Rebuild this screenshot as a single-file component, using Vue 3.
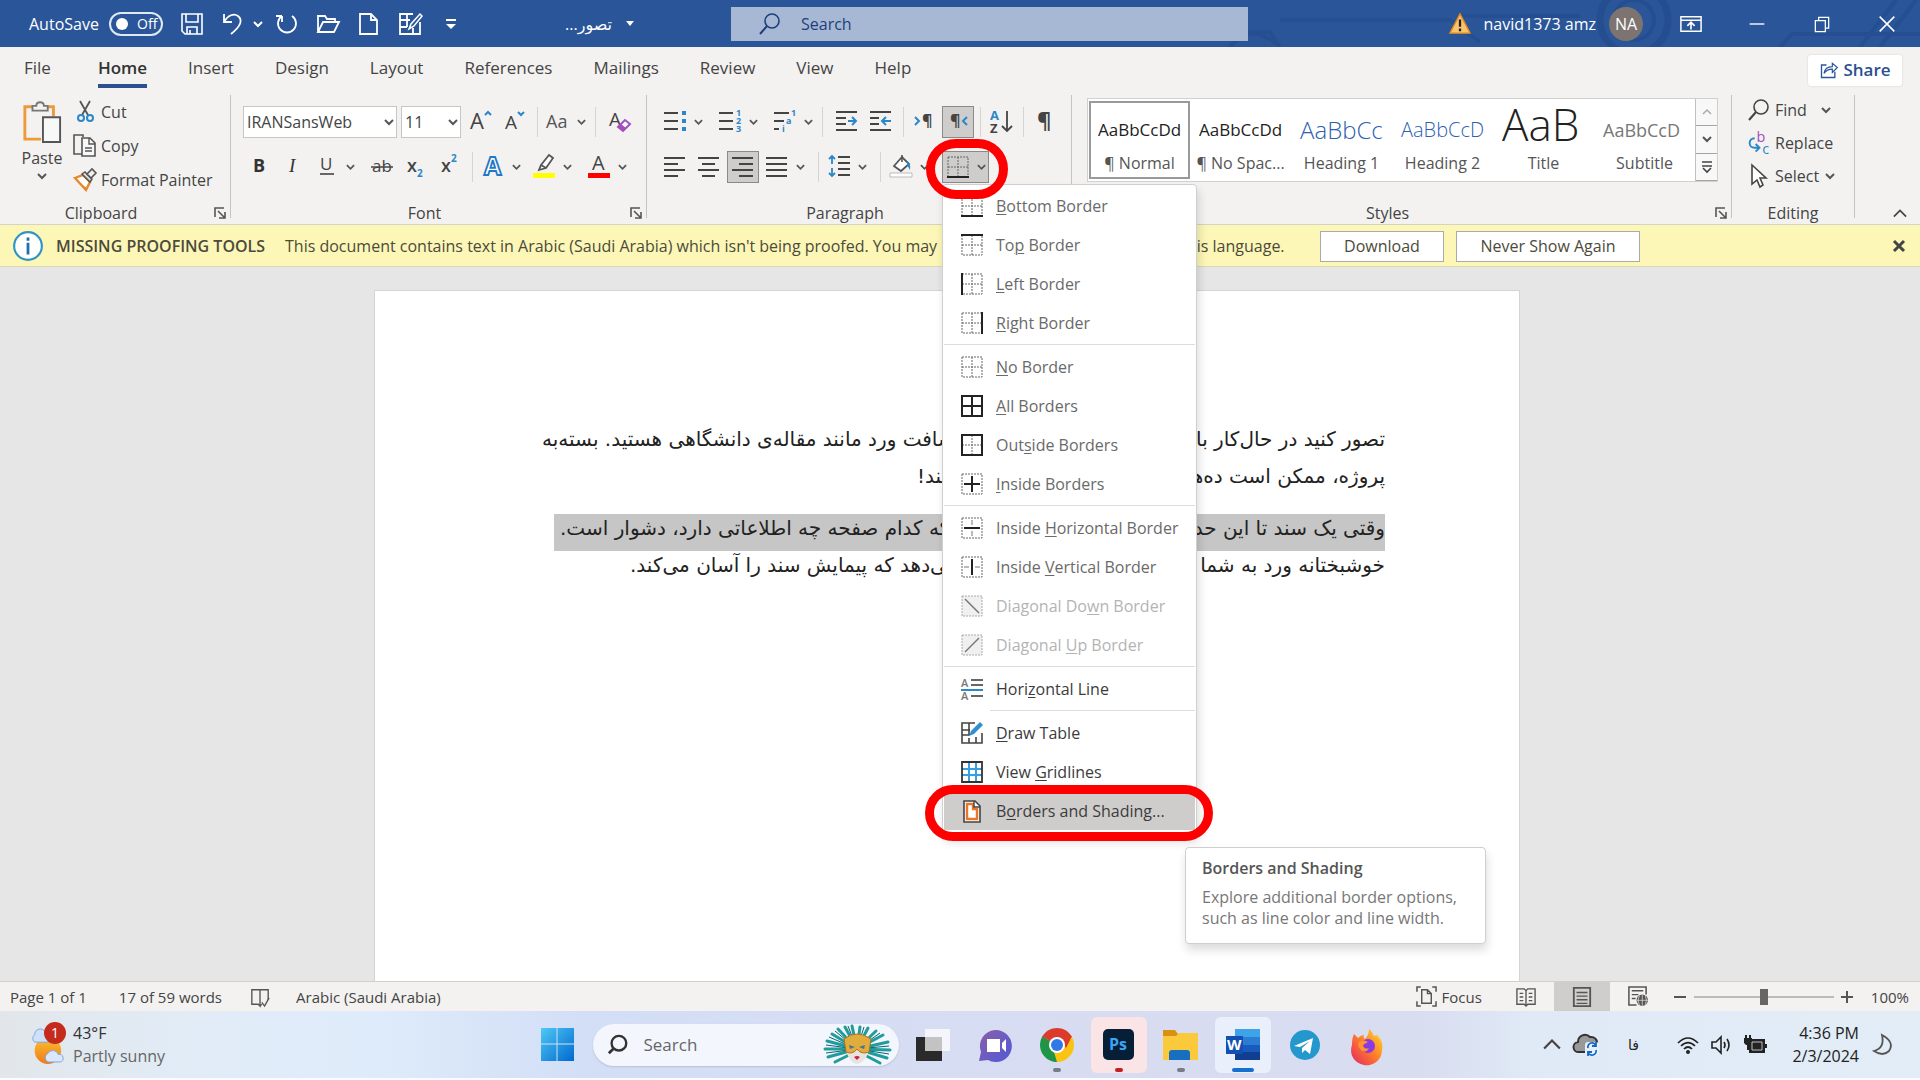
<script setup>
import { h } from 'vue'

const K = '#444'
const B = '#2b88c8'
const line = (d, c = K, w = 2) => `<path d="${d}" fill="none" stroke="${c}" stroke-width="${w}"/>`

// Table-border glyphs: a dotted 2x2 grid with solid strokes laid over it
const grid = '<path d="M1 1H21V21H1ZM11 1V21M1 11H21" fill="none" stroke="#666" stroke-width="1" stroke-dasharray="2 1"/>'
const outer = '<path d="M1 1H21V21H1Z" fill="none" stroke="#666" stroke-width="1" stroke-dasharray="2 1"/>'
const bold = d => `<path d="${d}" fill="none" stroke="#222" stroke-width="2"/>`

const paths = {
  save: line('M2 2H22V22H5L2 19ZM6 2V10H18V2M7 22V15H17V22M10 18V22', '#fff', 1.6),
  undo: line('M3 2V10H11M3 10C7 3 13 1 17 4C22 8 20 14 10 22', '#fff', 1.8),
  redo: line('M17 4A9 9 0 1 1 7 4M7 4H1M7 4V10', '#fff', 1.8),
  open: line('M2 20V4H9L11 7H19V10M2 20H18L23 10H7Z', '#fff', 1.8),
  page: line('M3 2H14L20 8V22H3ZM14 2V8H20', '#fff', 1.8),
  table: line('M15 2H2V22H22V10M2 8H12M2 15H9M9 2V15M15 16V22', '#fff', 1.8) + '<path d="M22 2L13 12L11 17L16 14L24 4Z" fill="#2a5699" stroke="#fff" stroke-width="1.5"/>',
  more: line('M7 8H17', '#fff', 2) + '<path d="M7 12H17L12 17Z" fill="#fff"/>',
  search: '<circle cx="14" cy="9" r="7" fill="none" stroke="currentColor" stroke-width="1.6"/><path d="M9 14L2 22" stroke="currentColor" stroke-width="2"/>',
  find: '<circle cx="13" cy="10" r="8" fill="none" stroke="currentColor" stroke-width="2.6"/><path d="M7 16L2 21" stroke="currentColor" stroke-width="3"/>',
  warn: '<path d="M12 1L23 22H1Z" fill="#f9c46b" stroke="#e58a1b" stroke-width="1.5"/><path d="M12 7V15M12 17V20" stroke="#222" stroke-width="2.5"/>',
  ribbonopt: line('M1 4H23V20H1ZM1 8H23', '#fff', 1.6) + line('M12 18V10M8 14L12 10L16 14', '#fff', 1.8),
  min: line('M4 12H20', '#fff', 1.5),
  restore: line('M4 8H16V21H4ZM8 8V4H20V17H16', '#fff', 1.5),
  close: line('M4 4L20 20M20 4L4 20', 'currentColor', 1.7),
  share: line('M9 6H3V21H19V14', '#2b579a', 1.6) + line('M6 16C7 10 11 8 16 8V4L22 9L16 15V11C12 11 9 12 6 16Z', '#2b579a', 1.4),
  paste: '<path d="M12 6H3V40H20M26 6H33V16" fill="none" stroke="#ee9a3a" stroke-width="3"/><path d="M11 10V5H15C15 0 23 0 23 5H27V10Z" fill="#f3f2f1" stroke="#777" stroke-width="2"/><path d="M22 17H40V43H22Z" fill="#f8f8f8" stroke="#555" stroke-width="2"/>',
  cut: line('M7 1L15 15M17 1L9 15', '#555', 1.8) + '<circle cx="8" cy="18" r="3" fill="none" stroke="#2b88c8" stroke-width="2"/><circle cx="17" cy="18" r="3" fill="none" stroke="#2b88c8" stroke-width="2"/>',
  copy: line('M9 20H1V1H10V3', '#555', 1.6) + '<path d="M9 4H17L22 9V22H9Z" fill="#f8f8f8" stroke="#555" stroke-width="1.6"/>' + line('M16 4V10H22M12 14H19M12 17H19', '#555', 1.4),
  painter: '<path d="M2 10L10 7L17 14L13 22Z" fill="#fff" stroke="#e8872b" stroke-width="2.4"/><path d="M6 15L14 20L12 22Z" fill="#e8872b"/><path d="M9 6L12 4L19 11L17 14Z" fill="#ddd" stroke="#555" stroke-width="1.5"/><path d="M14 6L19 1L23 5L18 10Z" fill="#eee" stroke="#555" stroke-width="1.6"/>',
  launcher: line('M1 10V1H10M4 4L11 11M11 5V11H5', '#555', 1.6),
  caret: line('M1 2L5 6L9 2', '#555', 2),
  up: line('M1 8L8 1L15 8', '#444', 2),
  grow: '<text x="0" y="19" font-size="22" fill="#444">A</text>' + line('M15 5L18 2L21 5', B),
  shrink: '<text x="1" y="19" font-size="19" fill="#444">A</text>' + line('M14 2L17 5L20 2', B),
  aa: '<text x="-1" y="18" font-size="18" fill="#555">Aa</text>',
  clear: '<text x="0" y="16" font-size="19" fill="#444">A</text><path d="M9 17L16 10L21 14L14 21Z" fill="#fff" stroke="#a44fbd" stroke-width="2"/><path d="M9 17L12 14L17 18L14 21Z" fill="#a44fbd"/>',
  bold: '<text x="5" y="17" font-size="18" font-weight="700" fill="#333">B</text>',
  italic: '<text x="7" y="17" font-size="19" font-style="italic" style="font-family:Liberation Serif,serif" fill="#333">I</text>',
  under: '<text x="4" y="15" font-size="17" fill="#444">U</text>' + line('M4 19H18', '#444', 1.6),
  strike: '<text x="1" y="17" font-size="17" fill="#444">ab</text>' + line('M0 12H22', '#444', 1.5),
  sub: '<text x="2" y="17" font-size="18" font-weight="600" fill="#444">x</text><text x="12" y="22" font-size="10" font-weight="700" fill="#2b88c8">2</text>',
  sup: '<text x="2" y="17" font-size="18" font-weight="600" fill="#444">x</text><text x="12" y="7" font-size="10" font-weight="700" fill="#2b88c8">2</text>',
  effect: '<text x="2" y="20" font-size="25" font-weight="700" fill="#fff" stroke="#1f78c8" stroke-width="1.8">A</text>',
  highlight: '<path d="M0 18H22V23H0Z" fill="#ff0"/><path d="M8 10L16 0L20 3L13 13L6 15ZM8 10L13 13" fill="#fff" stroke="#555" stroke-width="1.8"/>',
  color: '<text x="4" y="15" font-size="20" fill="#444">A</text><path d="M0 18H22V23H0Z" fill="#f00"/>',
  bullets: line('M0 3H14M0 11H14M0 19H14') + '<path d="M18 1H22V5H18ZM18 9H22V13H18ZM18 17H22V21H18Z" fill="#2b88c8"/>',
  numbers: line('M0 3H14M0 11H14M0 19H14') + '<g font-size="9" font-weight="700" fill="#2b88c8"><text x="17" y="6">1</text><text x="17" y="14">2</text><text x="17" y="22">3</text></g>',
  multi: line('M0 3H15M0 11H10M0 19H5') + '<g font-size="9" font-weight="700" fill="#2b88c8"><text x="17" y="6">1</text><text x="12" y="14">a</text><text x="8" y="22">i</text></g>',
  indent: line('M0 2H21M0 8H10M0 14H10M0 20H21') + line('M12 11H20M16 7L20 11L16 15', B),
  outdent: line('M0 2H21M0 8H9M0 14H9M0 20H21') + line('M12 11H21M16 7L12 11L16 15', B),
  ltr: line('M2 7L6 11L2 15', B) + '<text x="9" y="16" font-size="16" font-weight="700" fill="#444">¶</text>',
  rtl: line('M20 7L16 11L20 15', B) + '<text x="3" y="16" font-size="16" font-weight="700" fill="#444">¶</text>',
  sort: '<text x="0" y="10" font-size="13" font-weight="700" fill="#2b88c8">A</text><text x="0" y="23" font-size="13" font-weight="700" fill="#444">Z</text>' + line('M17 1V21M12 16L17 21L22 16', '#444', 1.8),
  pilcrow: '<text x="4" y="18" font-size="22" font-weight="700" fill="#444">¶</text>',
  left: line('M0 3H21M0 9H14M0 15H21M0 21H14'),
  center: line('M0 3H21M4 9H17M0 15H21M4 21H17'),
  right: line('M0 3H21M7 9H21M0 15H21M7 21H21'),
  justify: line('M0 3H21M0 9H21M0 15H21M0 21H21'),
  spacing: line('M10 2H22M10 8H22M10 14H22M10 20H22') + line('M4 1V9M1 4L4 1L7 4M4 13V21M1 18L4 21L7 18', B, 1.8),
  fill: '<path d="M4 11L12 2L19 9L11 16Z" fill="#fff" stroke="#555" stroke-width="1.8"/><path d="M12 7V0" stroke="#555" stroke-width="1.6"/><path d="M17 6Q21 8 20 15L17 10Z" fill="#2b88c8"/><path d="M0 18H22V22H0Z" fill="#fff" stroke="#bbb"/>',
  replace: '<text x="10" y="11" font-size="15" fill="#a44fbd">b</text><text x="16" y="23" font-size="15" fill="#2b88c8">c</text>' + line('M8 7C1 7 1 17 8 17H13M9 13L13 17L9 21', B),
  select: '<path d="M5 1V20L10 16L13 23L16 21L13 14H19Z" fill="#fff" stroke="#444" stroke-width="1.6"/>',
  info: '<circle cx="15" cy="15" r="13" fill="#fff" stroke="#2f93c8" stroke-width="2"/><path d="M15 7V10M15 12V23" stroke="#1f6fae" stroke-width="2.6"/>',
  bottom: grid + bold('M0 21H22'), top: grid + bold('M0 1H22'), leftb: grid + bold('M1 0V22'), rightb: grid + bold('M21 0V22'),
  none: grid, all: bold('M1 1H21V21H1ZM11 1V21M1 11H21'), outside: grid + bold('M1 1H21V21H1Z'), inside: outer + bold('M11 3V19M3 11H19'),
  insideh: outer + line('M11 3V8M11 14V19', '#777', 1) + bold('M3 11H19'), insidev: outer + line('M3 11H8M14 11H19', '#777', 1) + bold('M11 3V19'),
  ddown: '<path d="M1 1H21V21H1Z" fill="#f0f0f0" stroke="#aaa" stroke-dasharray="2 1"/>' + line('M4 4L18 18', '#777', 1.5),
  dup: '<path d="M1 1H21V21H1Z" fill="#f0f0f0" stroke="#aaa" stroke-dasharray="2 1"/>' + line('M4 18L18 4', '#777', 1.5),
  hline: '<g font-size="11" font-weight="600" fill="#777"><text x="0" y="9">A</text><text x="0" y="22">A</text></g>' + line('M10 2H22M10 7H22M10 18H22', '#666') + line('M0 12H22', B),
  draw: line('M14 1H1V21H21V11M1 8H9M8 1V13H1M15 15V21M8 16V21', K, 1.6) + '<path d="M19 0L10 9L8 14L13 12L22 3Z" fill="#2f8fd0"/>',
  gridlines: line('M8 1V21M15 1V21M1 8H21M1 14H21', '#38a0de', 2) + line('M1 1H21V21H1Z', '#333', 1.8),
  shading: '<path d="M3 1H14L19 6V22H3Z" fill="#fff" stroke="#444" stroke-width="1.6"/><path d="M6 4H12V9H16V19H6Z" fill="#fff" stroke="#e8762b" stroke-width="2.4"/>' + line('M13 1V7H19', K, 1.4),
  proof: line('M11 3H2V19H9L11 21V3H20V14M11 21L13 19', '#555', 1.5) + line('M13 17L16 21L21 12', '#555', 1.5),
  focus: line('M1 6V1H5M17 1H21V6M1 16V21H5M21 16V21H17', '#555', 1.6) + line('M6 4H12L16 8V18H6ZM12 4V8H16', '#555', 1.5),
  read: line('M11 4L9 2H1V19H9L11 21L13 19H21V2H13ZM11 4V21', '#555', 1.5) + line('M4 7H8M4 11H8M4 15H8M14 7H18M14 11H18M14 15H18', '#555', 1.5),
  print: line('M2 1H20V21H2Z', '#555', 2) + line('M5 6H17M5 10H17M5 14H17M5 18H17', '#555', 1.5),
  web: line('M10 20H2V1H20V9', '#555', 1.6) + line('M5 5H17M5 9H12M5 13H9', '#555', 1.5) + '<circle cx="16" cy="15" r="6" fill="#555"/><path d="M10 15H22M16 9V21M13 10Q10 15 13 20M19 10Q22 15 19 20" fill="none" stroke="#ddd" stroke-width="0.8"/>'
}

const art = {
  weather: '<defs><linearGradient id="sun" x2="0" y2="1"><stop stop-color="#fbc02d"/><stop offset="1" stop-color="#ef7c1a"/></linearGradient></defs><circle cx="17" cy="25" r="14" fill="url(#sun)"/><path d="M3 16a5 5 0 0 1 0-8a6 6 0 0 1 12 0a4 4 0 0 1 1 8Z" fill="#cfe0fb" stroke="#7ea2e0"/><path d="M17 37a5 5 0 0 1 0-9a6 6 0 0 1 11 1a4 4 0 0 1 2 8Z" fill="#d9e8fd" stroke="#7ea2e0"/>',
  win: '<defs><linearGradient id="wg" x2="1" y2="1"><stop stop-color="#4fc8f5"/><stop offset="1" stop-color="#0069cf"/></linearGradient></defs><path d="M0 0H16V16H0ZM17 0H34V16H17ZM0 17H16V34H0ZM17 17H34V34H17Z" fill="url(#wg)"/>',
  mask: '<g stroke="#1f9c9c" stroke-width="3" stroke-linecap="round"><path d="M34 24L4 16M34 24L2 24M34 24L5 32M34 24L9 9M34 24L15 4M34 24L22 2M34 24L29 1M34 24L37 2M34 24L45 3M34 24L53 6M34 24L60 10M34 24L65 17M34 24L67 25M34 24L64 33M34 26L12 37M34 26L57 38"/></g><g stroke="#0f6070" stroke-width="1"><path d="M34 24L3 20M34 24L6 12M34 24L12 6M34 24L25 1M34 24L41 2M34 24L57 8M34 24L66 21M34 24L66 29M34 24L3 28"/></g><path d="M23 12Q34 6 46 12V26Q42 38 34 39Q27 38 23 26Z" fill="#e9e3e0"/><path d="M21 14Q34 4 48 14L46 27Q38 30 34 24Q30 30 23 27Z" fill="#e0ad3c" stroke="#a87520"/><path d="M26 20L32 22L27 24ZM42 20L36 22L41 24Z" fill="#4d6f95"/><path d="M31 32Q34 30 37 32L34 35Z" fill="#c9204a"/>',
  task: '<path d="M0 8H26V32H0Z" fill="#2a2a2a"/><path d="M9 0H34V22H9Z" fill="#fff" opacity=".72"/>',
  chat: '<defs><linearGradient id="ch" x2="1" y2="1"><stop stop-color="#8b5fa8"/><stop offset="1" stop-color="#5059d8"/></linearGradient></defs><path d="M0 32L2 23A16 16 0 1 1 9 31Z" fill="url(#ch)"/><path d="M8 10H21V23H8ZM23 14L27 10V23L23 19Z" fill="#fff"/>',
  chrome: '<path d="M17 17L2.300 8.500A17 17 0 0 1 31.700 8.500Z" fill="#dc3b2c"/><path d="M17 17L31.700 8.500A17 17 0 0 1 17 34Z" fill="#fbc412"/><path d="M17 17V34A17 17 0 0 1 2.300 8.500Z" fill="#1d9747"/><path d="M17 8H32L26 20ZM9 21L2 8L9 13Z" fill="#dc3b2c"/><path d="M25 21L17 34L14 24Z" fill="#fbc412"/><path d="M9 21L2.300 8.500L9 13Z" fill="#1d9747"/><circle cx="17" cy="17" r="8" fill="#fff"/><circle cx="17" cy="17" r="6" fill="#2f78e8"/>',
  ps: '<rect width="31" height="31" rx="5" fill="#061e36"/><text x="6" y="21" font-size="16" font-weight="700" fill="#3ba4f6">Ps</text>',
  folder: '<path d="M0 0H12L15 4V8H0Z" fill="#d9920f"/><path d="M0 6H13L16 3H35V30H0Z" fill="#fbca3c"/><path d="M6 30V23Q6 20 9 20H24Q27 20 27 23V30Z" fill="#1670bf"/>',
  word: '<path d="M9 0H34V8H9Z" fill="#3fa3ea"/><path d="M9 8H34V16H9Z" fill="#2b7cd3"/><path d="M9 16H34V23H9Z" fill="#185abd"/><path d="M9 23H34V31H9Z" fill="#103f91"/><path d="M0 7H17V25H0Z" fill="#1450b4"/><text x="1" y="21" font-size="15" font-weight="700" fill="#fff">W</text>',
  telegram: '<circle cx="16" cy="16" r="15" fill="#2498cc"/><path d="M5 17L24 9L21 25L16 21L13 24V19L21 12L11 18Z" fill="#fff"/>',
  firefox: '<defs><linearGradient id="ff" x1="1" x2="0" y2="1"><stop stop-color="#ffe226"/><stop offset=".5" stop-color="#ff7a2a"/><stop offset="1" stop-color="#e3206c"/></linearGradient></defs><path d="M3 5L7 9Q10 6 13 6Q12 9 14 10Q18 6 18 0Q22 3 23 7L26 6Q33 13 31 21A15.500 15 0 1 1 1 16Q1 9 3 5Z" fill="url(#ff)"/><circle cx="17" cy="17" r="7" fill="#8a3ae0"/><path d="M8 13Q13 10 17 13L12 16Q13 21 18 19Q15 25 10 21Q6 17 8 13Z" fill="#ff9430"/>',
  cloud: '<path d="M5 19A5 5 0 0 1 4 9A7 7 0 0 1 16 4A6 6 0 0 1 23 11L18 19Z" fill="#999" stroke="#333" stroke-width="2"/><rect x="11" y="9" width="14" height="14" rx="3" fill="#e6f0fb"/><path d="M14 15A4 4 0 0 1 22 13M22 9V13H18M22 17A4 4 0 0 1 14 19M14 23V19H18" fill="none" stroke="#1668c7" stroke-width="1.800"/>',
  wifi: line('M1 8Q11 -2 21 8M4 11Q11 4 18 11M7 14Q11 10 15 14', '#222', 1.7) + '<circle cx="11" cy="17" r="2" fill="#222"/>',
  sound: line('M1 7H5L10 2V18L5 13H1ZM13 7Q15 10 13 13M16 4Q20 10 16 16', '#222', 1.6),
  battery: '<path d="M6 5H20V17H6Z" fill="#222" stroke="#222" stroke-width="2"/><path d="M20 9H23V13H20ZM0 3H8V8L6 10H2L0 8ZM1 0H3V4H1ZM5 0H7V4H5Z" fill="#222"/><path d="M4 10V14H7" stroke="#222" stroke-width="2" fill="none"/><path d="M8 7H18V15H8Z" fill="none" stroke="#dde9f5" stroke-width="0.800"/>',
  moon: line('M9 1Q22 8 16 17Q10 23 1 17Q12 14 9 1Z', '#555', 1.8)
}

const Icon = p => h('svg', {
  viewBox: p.box || '0 0 24 24',
  width: p.w || 24,
  height: p.h || p.w || 24,
  'aria-hidden': 'true',
  innerHTML: paths[p.n] || art[p.n]
})

const quick = ['save', 'undo', 'redo', 'open', 'page', 'table', 'more']
const tabs = ['File', 'Home', 'Insert', 'Design', 'Layout', 'References', 'Mailings', 'Review', 'View', 'Help']

// n: glyph, t: accessible name, c: has a drop-down, m: leading gap; '|' is a divider
const fontTop = [{ n: 'grow', t: 'Grow font', m: 4 }, { n: 'shrink', t: 'Shrink font', m: 2 }, '|', { n: 'aa', t: 'Change case', c: 1, m: 4 }, '|', { n: 'clear', t: 'Clear formatting', m: 8 }]
const fontBottom = [{ n: 'bold', t: 'Bold' }, { n: 'italic', t: 'Italic', m: 2 }, { n: 'under', t: 'Underline', c: 1, m: 2 }, { n: 'strike', t: 'Strikethrough', m: 8 }, { n: 'sub', t: 'Subscript', m: 2 }, { n: 'sup', t: 'Superscript', m: 2 }, '|', { n: 'effect', t: 'Text effects', c: 1, m: 4 }, { n: 'highlight', t: 'Highlight', c: 1, m: 4 }, { n: 'color', t: 'Font color', c: 1, m: 8 }]
const paraTop = [{ n: 'bullets', t: 'Bullets', c: 1 }, { n: 'numbers', t: 'Numbering', c: 1, m: 8 }, { n: 'multi', t: 'Multilevel list', c: 1, m: 8 }, '|', { n: 'indent', t: 'Increase indent', m: 8 }, { n: 'outdent', t: 'Decrease indent', m: 2 }, '|', { n: 'ltr', t: 'Left to right', m: 4 }, { n: 'rtl', t: 'Right to left', m: 2, on: 1 }, '|', { n: 'sort', t: 'Sort', m: 4 }, '|', { n: 'pilcrow', t: 'Show marks', m: 4 }]
const paraBottom = [{ n: 'left', t: 'Align left' }, { n: 'center', t: 'Center', m: 2 }, { n: 'right', t: 'Align right', m: 2, on: 1 }, { n: 'justify', t: 'Justify', c: 1, m: 2 }, '|', { n: 'spacing', t: 'Line spacing', c: 1, m: 4 }, '|', { n: 'fill', t: 'Shading', c: 1, m: 4 }]

const styles = [
  { s: 'AaBbCcDd', l: '¶ Normal', k: 's-body' },
  { s: 'AaBbCcDd', l: '¶ No Spac...', k: 's-body' },
  { s: 'AaBbCc', l: 'Heading 1', k: 's-h1' },
  { s: 'AaBbCcD', l: 'Heading 2', k: 's-h2' },
  { s: 'AaB', l: 'Title', k: 's-title' },
  { s: 'AaBbCcD', l: 'Subtitle', k: 's-sub' }
]

const menu = [
  ['bottom', '', 'B', 'ottom Border'], ['top', 'To', 'p', ' Border'], ['leftb', '', 'L', 'eft Border'], ['rightb', '', 'R', 'ight Border'], '-',
  ['none', '', 'N', 'o Border'], ['all', '', 'A', 'll Borders'], ['outside', 'Out', 's', 'ide Borders'], ['inside', '', 'I', 'nside Borders'], '-',
  ['insideh', 'Inside ', 'H', 'orizontal Border'], ['insidev', 'Inside ', 'V', 'ertical Border'], ['ddown', 'Diagonal Do', 'w', 'n Border', 'off'], ['dup', 'Diagonal ', 'U', 'p Border', 'off'], '-',
  ['hline', 'Hori', 'z', 'ontal Line', 'dark'], '~',
  ['draw', '', 'D', 'raw Table', 'dark'], ['gridlines', 'View ', 'G', 'ridlines', 'dark'], ['shading', 'B', 'o', 'rders and Shading...', 'dark hot']
]

const apps = [
  { n: 'task', w: 34, h: 32, t: 'Task view' }, { n: 'chat', w: 32, h: 32, t: 'Chat' }, { n: 'chrome', w: 34, h: 34, t: 'Chrome', k: 'run' },
  { n: 'ps', w: 31, h: 31, t: 'Photoshop', k: 'run alert' }, { n: 'folder', w: 35, h: 30, t: 'Files', k: 'run' }, { n: 'word', w: 34, h: 31, t: 'Word', k: 'run current' },
  { n: 'telegram', w: 32, h: 32, t: 'Telegram' }, { n: 'firefox', w: 32, h: 32, t: 'Firefox' }
]
</script>

<template>
  <div class="app">
    <header class="title">
      <svg class="circuit" viewBox="0 0 700 47" preserveAspectRatio="xMaxYMin slice" aria-hidden="true">
        <g fill="none" stroke="#1f4788" stroke-width="4" opacity=".5">
          <path d="M60 20H230L260 42M0 32H50L60 47M10 47Q30 20 60 47M360 16H240M560 47L572 34H700M640 47L676 0M660 47L696 0" />
          <circle cx="414" cy="20" r="34" stroke-width="7" /><circle cx="414" cy="20" r="20" />
        </g>
      </svg>
      <label class="autosave">AutoSave <input type="checkbox" /><span class="toggle"><i></i>Off</span></label>
      <nav class="quick">
        <button v-for="q in quick" :key="q" :class="'q-' + q" :aria-label="q"><Icon :n="q" :w="24" /><svg v-if="q === 'undo'" width="10" height="8" viewBox="0 0 10 8"><path d="M1 2L5 6L9 2" fill="none" stroke="#fff" stroke-width="2" /></svg></button>
      </nav>
      <button class="docname"><span dir="rtl">تصور...</span><svg width="8" height="6" viewBox="0 0 8 6"><path d="M0 0H8L4 5Z" fill="#fff" /></svg></button>
      <label class="find"><Icon n="search" :w="24" /><input type="search" placeholder="Search" aria-label="Search" /></label>
      <div class="account"><Icon n="warn" :w="22" /><span>navid1373 amz</span><b>NA</b></div>
      <div class="window">
        <button aria-label="Ribbon display"><Icon n="ribbonopt" :w="22" /></button>
        <button aria-label="Minimize"><Icon n="min" :w="22" /></button>
        <button aria-label="Restore"><Icon n="restore" :w="20" /></button>
        <button aria-label="Close"><Icon n="close" :w="22" /></button>
      </div>
    </header>

    <nav class="tabs">
      <a v-for="t in tabs" :key="t" href="#" :class="{ on: t === 'Home', file: t === 'File' }">{{ t }}</a>
      <button class="share"><Icon n="share" :w="20" />Share</button>
    </nav>

    <section class="ribbon">
      <div class="group clipboard">
        <div class="content">
          <button class="paste"><Icon n="paste" box="0 0 42 45" :w="40" :h="43" />Paste<Icon n="caret" box="0 0 10 8" :w="10" :h="8" /></button>
          <div class="stack">
            <button><Icon n="cut" :w="24" />Cut</button>
            <button><Icon n="copy" :w="24" />Copy</button>
            <button><Icon n="painter" :w="24" />Format Painter</button>
          </div>
        </div>
        <footer><span>Clipboard</span><button aria-label="Clipboard options"><Icon n="launcher" box="0 0 12 12" :w="12" /></button></footer>
      </div>

      <div class="group font">
        <div class="content rows">
          <div class="row">
            <label class="combo name"><select aria-label="Font name"><option>IRANSansWeb</option></select><Icon n="caret" box="0 0 10 8" :w="10" :h="8" /></label>
            <label class="combo size"><select aria-label="Font size"><option>11</option></select><Icon n="caret" box="0 0 10 8" :w="10" :h="8" /></label>
            <template v-for="(x, i) in fontTop" :key="i">
              <i v-if="x === '|'" class="bar"></i>
              <button v-else class="tool" :class="['m' + (x.m || 0), { on: x.on }]" :aria-label="x.t"><Icon :n="x.n" box="0 0 22 24" :w="22" :h="24" /><Icon v-if="x.c" n="caret" box="0 0 10 8" :w="9" :h="8" /></button>
            </template>
          </div>
          <div class="row">
            <template v-for="(x, i) in fontBottom" :key="i">
              <i v-if="x === '|'" class="bar"></i>
              <button v-else class="tool" :class="['m' + (x.m || 0), { on: x.on }]" :aria-label="x.t"><Icon :n="x.n" box="0 0 22 24" :w="22" :h="24" /><Icon v-if="x.c" n="caret" box="0 0 10 8" :w="9" :h="8" /></button>
            </template>
          </div>
        </div>
        <footer><span>Font</span><button aria-label="Font options"><Icon n="launcher" box="0 0 12 12" :w="12" /></button></footer>
      </div>

      <div class="group para">
        <div class="content rows">
          <div class="row">
            <template v-for="(x, i) in paraTop" :key="i">
              <i v-if="x === '|'" class="bar"></i>
              <button v-else class="tool" :class="['m' + (x.m || 0), { on: x.on }]" :aria-label="x.t"><Icon :n="x.n" box="0 0 22 24" :w="22" :h="24" /><Icon v-if="x.c" n="caret" box="0 0 10 8" :w="9" :h="8" /></button>
            </template>
          </div>
          <div class="row">
            <template v-for="(x, i) in paraBottom" :key="i">
              <i v-if="x === '|'" class="bar wide"></i>
              <button v-else class="tool" :class="['m' + (x.m || 0), { on: x.on }]" :aria-label="x.t"><Icon :n="x.n" box="0 0 22 24" :w="22" :h="24" /><Icon v-if="x.c" n="caret" box="0 0 10 8" :w="9" :h="8" /></button>
            </template>
            <div class="borders">
              <button class="tool on" aria-label="Borders"><Icon n="bottom" box="0 0 22 22" :w="22" /><Icon n="caret" box="0 0 10 8" :w="9" :h="8" /></button>
              <div class="menu" role="menu">
                <template v-for="(m, i) in menu" :key="i">
                  <hr v-if="m === '-'" /><hr v-else-if="m === '~'" class="inset" />
                  <button v-else role="menuitem" :class="m[4]" :disabled="m[4] === 'off'"><Icon :n="m[0]" box="0 0 22 22" :w="22" /><span>{{ m[1] }}<u>{{ m[2] }}</u>{{ m[3] }}</span></button>
                </template>
                <div class="ring low"></div>
                <div class="tip" role="tooltip"><b>Borders and Shading</b><p>Explore additional border options, such as line color and line width.</p></div>
              </div>
              <div class="ring"></div>
            </div>
          </div>
        </div>
        <footer><span>Paragraph</span><button aria-label="Paragraph options"><Icon n="launcher" box="0 0 12 12" :w="12" /></button></footer>
      </div>

      <div class="group styles">
        <div class="content">
          <div class="gallery">
            <button v-for="(s, i) in styles" :key="i" class="style" :class="{ on: i === 0 }"><span class="sample" :class="s.k">{{ s.s }}</span><span>{{ s.l }}</span></button>
            <div class="scroll">
              <button disabled aria-label="Previous styles"><svg width="10" height="8" viewBox="0 0 10 8"><path d="M1 6L5 2L9 6" fill="none" stroke="#aaa" stroke-width="1.5" /></svg></button>
              <button aria-label="Next styles"><Icon n="caret" box="0 0 10 8" :w="10" :h="8" /></button>
              <button aria-label="More styles"><svg width="10" height="12" viewBox="0 0 10 12"><path d="M0 1H10M0 5H10M1 7L5 11L9 7" fill="none" stroke="#444" stroke-width="1.600" /></svg></button>
            </div>
          </div>
        </div>
        <footer><span>Styles</span><button aria-label="Style options"><Icon n="launcher" box="0 0 12 12" :w="12" /></button></footer>
      </div>

      <div class="group editing">
        <div class="content">
          <div class="stack">
            <button><Icon n="search" :w="24" />Find<Icon class="far" n="caret" box="0 0 10 8" :w="10" :h="8" /></button>
            <button><Icon n="replace" box="0 0 25 24" :w="24" />Replace</button>
            <button><Icon n="select" :w="24" />Select<Icon class="near" n="caret" box="0 0 10 8" :w="10" :h="8" /></button>
          </div>
        </div>
        <footer><span>Editing</span></footer>
      </div>
      <button class="collapse" aria-label="Collapse ribbon"><Icon n="up" box="0 0 16 9" :w="14" :h="9" /></button>
    </section>

    <aside class="notice">
      <Icon n="info" box="0 0 30 30" :w="32" />
      <strong>MISSING PROOFING TOOLS</strong>
      <span class="msg">This document contains text in Arabic (Saudi Arabia) which isn't being proofed. You may be able to get proofing tools for this language.</span>
      <button>Download</button><button>Never Show Again</button>
      <button class="x" aria-label="Dismiss"><svg width="12" height="12" viewBox="0 0 12 12"><path d="M1 1L11 11M11 1L1 11" stroke="#444" stroke-width="3" /></svg></button>
    </aside>

    <main class="canvas">
      <article class="page" dir="rtl" lang="fa">
        <p class="l1"><span>تصور کنید در حال‌کار با</span><span>مایکروسافت ورد مانند مقاله‌ی دانشگاهی هستید. بسته‌به</span></p>
        <p class="l2"><span>پروژه، ممکن است ده‌ها</span><span>باشند!</span></p>
        <p class="l3 sel"><span>وقتی یک سند تا این حد</span><span>اینکه کدام صفحه چه اطلاعاتی دارد، دشوار است.</span></p>
        <p class="l4"><span>خوشبختانه ورد به شما</span><span>می‌دهد که پیمایش سند را آسان می‌کند.</span></p>
      </article>
    </main>

    <footer class="status">
      <span>Page 1 of 1</span><span class="words">17 of 59 words</span><Icon n="proof" box="0 0 22 22" :w="20" /><span class="lang">Arabic (Saudi Arabia)</span>
      <div class="views">
        <button class="focus"><Icon n="focus" box="0 0 22 22" :w="21" />Focus</button>
        <button aria-label="Read mode"><Icon n="read" box="0 0 22 22" :w="20" /></button>
        <button class="on" aria-label="Print layout"><Icon n="print" box="0 0 22 22" :w="20" /></button>
        <button aria-label="Web layout"><Icon n="web" box="0 0 22 22" :w="21" /></button>
        <button class="step" aria-label="Zoom out"><svg width="12" height="12" viewBox="0 0 12 12"><path d="M0 6H12" stroke="#555" stroke-width="2" /></svg></button>
        <input type="range" min="0" max="100" value="50" aria-label="Zoom" />
        <button class="step" aria-label="Zoom in"><svg width="12" height="12" viewBox="0 0 12 12"><path d="M0 6H12M6 0V12" stroke="#555" stroke-width="2" /></svg></button>
        <span class="pct">100%</span>
      </div>
    </footer>

    <footer class="taskbar">
      <button class="weather"><span class="pic"><Icon n="weather" box="-3 -2 36 42" :w="34" :h="40" /><em>1</em></span><span><b>43°F</b><br />Partly sunny</span></button>
      <div class="dock">
        <button class="start" aria-label="Start"><Icon n="win" box="0 0 34 34" :w="33" /></button>
        <label class="pill"><Icon n="find" :w="22" /><input type="search" placeholder="Search" aria-label="Search the computer" /><Icon n="mask" box="0 0 69 40" :w="69" :h="40" /></label>
        <button v-for="a in apps" :key="a.n" class="app-icon" :class="a.k" :aria-label="a.t"><Icon :n="a.n" :box="`0 0 ${a.w} ${a.h}`" :w="a.w" :h="a.h" /></button>
      </div>
      <div class="tray">
        <Icon n="up" box="0 0 16 9" :w="18" :h="11" />
        <Icon class="t-cloud" n="cloud" box="0 0 25 24" :w="25" :h="24" />
        <span class="t-lang">فا</span>
        <Icon class="t-wifi" n="wifi" box="0 0 22 20" :w="22" :h="20" />
        <Icon class="t-gap" n="sound" box="0 0 21 20" :w="21" :h="20" />
        <Icon class="t-gap" n="battery" box="0 0 23 20" :w="23" :h="20" />
        <time>4:36 PM<br />2/3/2024</time>
        <Icon n="moon" box="0 0 20 22" :w="20" :h="22" />
      </div>
    </footer>
  </div>
</template>

<style>
body { margin: 0; background: #fff; }
</style>

<style scoped>
.app { min-height: 100vh; display: flex; flex-direction: column; font: 16px/20px "Open Sans", "DejaVu Sans", sans-serif; color: #444; overflow: hidden; box-sizing: border-box; padding-bottom: 2px; background: #fafcff; }
button, input, select { font: inherit; color: inherit; border: 0; background: none; padding: 0; margin: 0; }
button { white-space: nowrap; }
svg { flex: none; display: block; overflow: visible; }

.title { position: relative; height: 47px; background: #2a5699; color: #fff; display: flex; align-items: center; }
.title > * { position: relative; flex: none; }
.title .circuit { position: absolute; right: 0; top: 0; width: 700px; height: 47px; overflow: hidden; }
.autosave { margin-left: 29px; display: flex; align-items: center; width: 134px; justify-content: space-between; }
.autosave input { position: absolute; opacity: 0; }
.toggle { box-sizing: border-box; width: 54px; height: 24px; border: 2px solid #dfe8f5; border-radius: 12px; display: flex; align-items: center; gap: 9px; padding-left: 5px; font-size: 14px; }
.toggle i { width: 12px; height: 12px; border-radius: 50%; background: #fff; }
.quick { display: flex; margin-left: 17px; width: 376px; }
.quick button { margin-right: 17px; display: flex; align-items: center; }
.quick .q-undo { gap: 8px; margin-right: 12px; }
.docname { display: flex; align-items: center; gap: 14px; width: 82px; justify-content: flex-end; margin-left: -4px; }
.find { margin-left: 97px; width: 517px; height: 34px; background: #a6b8d4; color: #1f3f7a; display: flex; align-items: center; }
.find svg { margin: 0 19px 0 27px; }
.find input { flex: 1; min-width: 0; outline: 0; }
input::placeholder { color: inherit; opacity: 1; }
.account { margin-left: auto; display: flex; align-items: center; }
.account span { margin: 0 13px; }
.account b { width: 34px; height: 34px; border-radius: 50%; background: #7d7471; font-weight: 400; line-height: 34px; text-align: center; }
.window { display: flex; margin-left: 37px; margin-right: 22px; gap: 44px; align-items: center; }

.tabs { height: 46px; background: #f3f2f1; display: flex; align-items: center; padding: 0 18px 0 24px; gap: 41px; font-size: 17px; }
.tabs a { color: #444; text-decoration: none; line-height: 24px; padding: 4px 0; border-bottom: 4px solid transparent; }
.tabs .file { margin-right: 6px; }
.tabs .on { border-color: #2b4f91; color: #333; font-weight: 600; }
.share { margin-left: auto; width: 94px; height: 31px; background: #fff; border-radius: 3px; box-shadow: 0 0 2px #ccc; color: #2b4f91; font-weight: 600; display: flex; align-items: center; justify-content: center; gap: 4px; }

.ribbon { background: #f3f2f1; height: 132px; display: flex; box-sizing: border-box; padding: 2px 0 6px; border-bottom: 1px solid #d5d2c8; }
.group { box-sizing: border-box; border-right: 1px solid #c4c4c4; display: flex; flex-direction: column; }
.clipboard { width: 231px; }
.font { width: 416px; }
.para { width: 425px; }
.styles { width: 660px; }
.editing { width: 123px; }
.content { flex: 1; display: flex; min-height: 0; }
.group > footer { display: flex; height: 20px; margin-bottom: -5px; align-items: center; }
.group > footer span { flex: 1; text-align: center; }
.group > footer button { width: 28px; padding-left: 12px; box-sizing: border-box; }
.paste { display: flex; flex-direction: column; align-items: center; margin-left: 19px; padding-top: 6px; width: 46px; height: 86px; gap: 4px; }
.stack { display: flex; flex-direction: column; margin-left: 8px; }
.stack button { height: 34px; display: flex; align-items: center; gap: 4px; }
.editing .stack { margin-left: 15px; margin-top: -2px; }
.editing .stack button { height: 33px; }
.far { margin-left: 10px; }
.near { margin-left: 2px; }
.rows { flex-direction: column; gap: 13px; padding-top: 11px; padding-left: 12px; }
.row { display: flex; height: 32px; align-items: center; flex: none; }
.combo { box-sizing: border-box; height: 32px; border: 1px solid #c6c6c6; background: #fff; display: flex; align-items: center; padding: 0 2px 0 3px; }
.combo select { appearance: none; flex: 1; min-width: 0; outline: 0; }
.name { width: 154px; }
.size { width: 60px; margin-left: 4px; }
.tool { box-sizing: border-box; height: 32px; padding: 0 5px; display: flex; align-items: center; gap: 8px; }
.tool svg + svg { margin-right: -2px; }
.tool.on { background: #cfcdcb; outline: 1px solid #8a8a8a; outline-offset: -1px; }
.m2 { margin-left: 2px; }
.m4 { margin-left: 4px; }
.m8 { margin-left: 8px; }
.bar { width: 1px; height: 30px; background: #d6d4d2; margin-left: 6px; }
.wide { margin-left: 10px; }
.borders { position: relative; margin-left: 10px; z-index: 5; }
.ring { position: absolute; left: -16px; top: -12px; width: 82px; height: 60px; box-sizing: border-box; border: 9px solid #fe0000; border-radius: 30px; pointer-events: none; z-index: 2; }
.menu { position: absolute; left: 0; top: 33px; width: 255px; box-sizing: border-box; background: #fff; border: 1px solid #cfcfcf; border-radius: 4px; box-shadow: 2px 6px 10px rgba(0, 0, 0, .14); padding: 1px 1px 5px; color: #6a6a6a; }
.menu button { width: 100%; height: 39px; display: flex; align-items: center; gap: 13px; padding-left: 17px; text-align: left; }
.menu hr { border: 0; height: 1px; margin: 2px 0; background: #dcdcdc; }
.menu .inset { margin-left: 46px; }
.menu .dark { color: #3c3c3c; }
.menu .off { color: #b4b4b4; }
.menu .hot { background: #cfcdcb; }
u { text-underline-offset: 2px; text-decoration-thickness: 1px; }
.ring.low { left: -18px; top: auto; bottom: -6px; width: 288px; height: 56px; border-radius: 28px; }
.tip { position: absolute; left: 242px; top: 662px; width: 301px; height: 97px; box-sizing: border-box; border: 1px solid #cfcfcf; border-radius: 4px; background: #fff; box-shadow: 1px 6px 10px rgba(0, 0, 0, .14); padding: 10px 16px; color: #777; line-height: 21px; }
.tip b { color: #555; font-weight: 600; }
.tip p { margin: 8px 0 0; }
.gallery { margin: 3px 0 0 15px; box-sizing: border-box; width: 631px; height: 84px; border: 1px solid #d0d0d0; background: #fff; display: flex; padding-left: 1px; }
.style { box-sizing: border-box; flex: 1; min-width: 0; margin: 2px 0; padding: 0 7px; border: 2px solid transparent; display: flex; flex-direction: column; align-items: center; overflow: hidden; color: #555; }
.style.on { border-color: #9a9a9a; }
.sample { width: 83px; height: 50px; line-height: 54px; overflow: hidden; text-align: left; color: #222; font-size: 17px; }
.s-h1 { font-size: 24px; font-weight: 300; color: #2f5fb0; }
.s-h2 { font-size: 20px; font-weight: 300; color: #2f5fb0; }
.s-title { font-size: 44px; font-weight: 300; line-height: 42px; }
.s-sub { font-size: 18px; color: #777; }
.scroll { width: 21px; display: flex; flex-direction: column; border-left: 1px solid #c0c0c0; }
.scroll button { flex: 1; display: grid; place-items: center; background: #f8f8f8; border-bottom: 1px solid #a5a5a5; }
.collapse { margin: auto 13px 0 auto; }

.notice { height: 42px; background: #fcf7b6; display: flex; align-items: center; border-bottom: 1px solid #dcd9b0; box-sizing: border-box; padding: 1px 0 0 12px; color: #4c4a3c; }
.notice strong { margin: 0 14px 0 12px; font-weight: 600; width: 215px; white-space: nowrap; }
.msg { width: 1005px; white-space: nowrap; margin-right: 30px; text-align: left; }
.notice button { height: 31px; box-sizing: border-box; width: 124px; border: 1px solid #aaa; background: #fff; margin-right: 12px; }
.notice button + button { width: 184px; }
.notice .x { width: 12px; border: 0; background: none; margin: 0 15px 0 auto; }

.canvas { flex: 1; background: #e6e6e6; display: flex; justify-content: center; padding: 23px 26px 0 0; }
.page { box-sizing: border-box; width: 1146px; background: #fff; border: 1px solid #d4d4d4; border-bottom: 0; padding: 134px 134px 0; font: 20px/29px "DejaVu Sans", sans-serif; color: #222; }
.page p { margin: 0; height: 37px; display: flex; justify-content: space-between; white-space: nowrap; }
.l1 { width: 843px; }
.page .l2 { width: 468px; margin-bottom: 15px; }
.l3 { width: 831px; box-sizing: border-box; padding-left: 6px; }
.l4 { width: 755px; }
.sel { background: #c6c6c6; }

.status { height: 30px; background: #f3f2f1; border-top: 1px solid #d0d0d0; box-sizing: border-box; display: flex; align-items: center; padding-left: 10px; font-size: 15px; white-space: nowrap; }
.words { margin: 0 28px 0 32px; }
.lang { margin-left: 26px; }
.views { margin-left: auto; display: flex; align-items: center; align-self: stretch; padding-right: 11px; }
.views button { width: 56px; height: 100%; display: flex; align-items: center; justify-content: center; }
.views .focus { width: auto; gap: 5px; margin-right: 16px; }
.views .on { background: #d0cecd; }
.views .step { width: 12px; }
.views button:nth-child(5) { margin-left: 8px; }
.views input { appearance: none; width: 140px; height: 20px; margin: 0 7px 0 8px; }
.views input::-webkit-slider-runnable-track { height: 2px; background: #bbb; }
.views input::-webkit-slider-thumb { appearance: none; width: 8px; height: 16px; margin-top: -7px; background: #666; }
.pct { margin-left: 18px; }

.taskbar { height: 67px; display: flex; align-items: center; color: #222; background: linear-gradient(90deg, #e2e6ea 0, #e1ecf7 10%, #deebfa 20%, #d2dff6 30%, #d6ddf3 45%, #d8dcf1 60%, #d8ddf0 74%, #e0eaf6 80%, #e2edf8 100%); }
.weather { display: flex; align-items: center; margin-left: 29px; gap: 10px; text-align: left; line-height: 23px; color: #666; flex: 1; }
.weather b { color: #333; font-weight: 400; }
.pic { position: relative; }
.pic em { position: absolute; left: 15px; top: -3px; width: 22px; height: 22px; border-radius: 50%; background: #c42b1c; color: #fff; font: 14px/22px "Open Sans", sans-serif; text-align: center; }
.dock { display: flex; align-items: center; margin-left: 13px; }
.start { margin-right: 19px; }
.pill { box-sizing: border-box; width: 306px; height: 42px; border-radius: 21px; background: #f3f6fd; box-shadow: 0 1px 2px #b8c0d4; display: flex; align-items: center; padding: 0 7px 0 14px; margin-right: 6px; color: #333; font-size: 17px; }
.pill input { flex: 1; min-width: 0; margin-left: 15px; outline: 0; color: #666; }
.app-icon { position: relative; width: 56px; height: 56px; margin-right: 6px; border-radius: 6px; display: grid; place-items: center; }
.app-icon:last-child { margin-right: 0; }
.run::after { content: ""; position: absolute; bottom: 1px; left: 24px; width: 8px; height: 4px; border-radius: 2px; background: #777c88; }
.alert { background: #fae4e6; }
.alert::after { background: #c42020; }
.current { background: #e9f0fc; }
.current::after { left: 17px; width: 22px; background: #1670cf; }
.tray { flex: 1; display: flex; align-items: center; justify-content: flex-end; padding-right: 27px; }
.t-cloud { margin-left: 13px; }
.t-lang { margin: 0 36px 0 29px; width: 13px; font-size: 14px; }
.t-gap { margin-left: 12px; }
.tray time { width: 92px; margin-right: 14px; text-align: right; line-height: 23px; }
</style>
